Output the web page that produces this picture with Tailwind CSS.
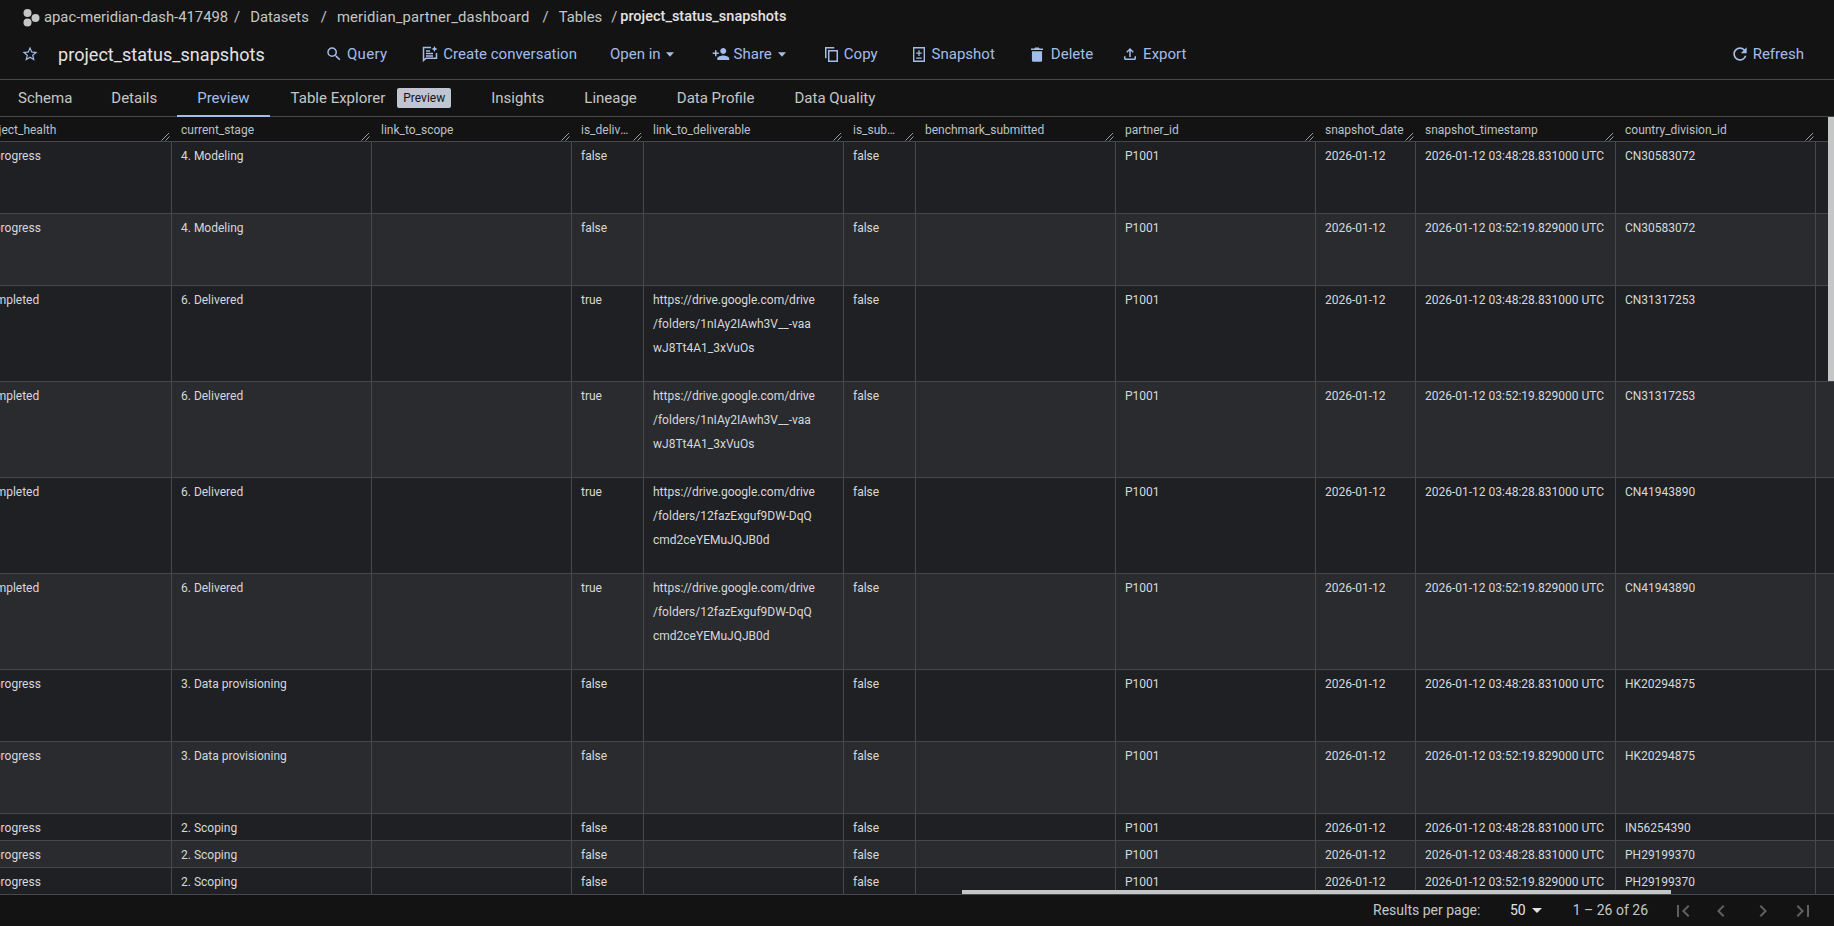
<!DOCTYPE html>
<html lang="en">

<head>
  <meta charset="UTF-8">
  <title>project_status_snapshots</title>
  <script src="https://cdn.jsdelivr.net/npm/@tailwindcss/browser@4"></script>
</head>

<body class="h-screen overflow-hidden bg-[#131314] font-[Roboto,sans-serif] text-[#c4c7c5] flex flex-col">
  <!-- Breadcrumb -->
  <nav class="h-[32px] flex items-center text-[14.8px] pl-[22px] pt-[2px] box-border shrink-0 whitespace-nowrap">
    <svg class="w-[19px] h-[19px] fill-[#c4c7c5]" viewBox="0 0 19 19">
      <circle cx="5.5" cy="5" r="4" />
      <circle cx="13.5" cy="10" r="4" />
      <circle cx="5.5" cy="14.5" r="4" />
    </svg>
    <span class="ml-[3px]">apac-meridian-dash-417498</span>
    <span class="ml-[6px]">/</span>
    <span class="ml-[10px]">Datasets</span>
    <span class="ml-[12px]">/</span>
    <span class="ml-[10px] tracking-[0.15px]">meridian_partner_dashboard</span>
    <span class="ml-[13px]">/</span>
    <span class="ml-[10px]">Tables</span>
    <span class="ml-[9px]">/</span>
    <span class="ml-[3px] text-[14.5px] text-[#e3e3e3] font-medium">project_status_snapshots</span>
  </nav>

  <!-- Title and actions -->
  <header class="h-[48px] flex items-center border-b border-[#47484b] text-[15px] text-[#a3bde8] shrink-0 box-border pb-[3px] whitespace-nowrap">
    <svg class="ml-[21px] w-[18px] h-[18px] fill-[#a3bde8]" viewBox="0 0 24 24">
      <path d="M22 9.24l-7.19-.62L12 2 9.19 8.63 2 9.24l5.46 4.73L5.82 21 12 17.27 18.18 21l-1.63-7.03L22 9.24zM12 15.4l-3.76 2.27 1-4.28-3.32-2.88 4.38-.38L12 6.1l1.71 4.04 4.38.38-3.32 2.88 1 4.28L12 15.4z" />
    </svg>
    <h1 class="ml-[19px] text-[18px] tracking-[0.05px] text-[#e3e3e3] w-[207px]">project_status_snapshots</h1>

    <button class="ml-[60px] flex items-center">
      <svg class="w-[18px] h-[18px] fill-[#a3bde8]" viewBox="0 0 24 24">
        <path d="M15.5 14h-.79l-.28-.27A6.471 6.471 0 0 0 16 9.5 6.5 6.5 0 1 0 9.5 16c1.61 0 3.09-.59 4.23-1.57l.27.28v.79l5 4.99L20.49 19l-4.99-5zm-6 0C7.01 14 5 11.99 5 9.5S7.01 5 9.5 5 14 7.01 14 9.5 11.99 14 9.5 14z" />
      </svg>
      <span class="ml-[4px] tracking-[0.3px]">Query</span>
    </button>

    <button class="ml-[35px] flex items-center">
      <svg class="w-[16px] h-[16px] fill-none stroke-[#a3bde8] stroke-[1.5]" viewBox="0 0 16 16">
        <path d="M9 1.5H1.5v13l2.5-2.2h10.5V7" />
        <path d="M4 5h4M4 7.5h7M4 10h7" />
        <path class="fill-[#a3bde8] stroke-none" d="M12.5 0l.9 2.1 2.1.9-2.1.9-.9 2.1-.9-2.1-2.1-.9 2.1-.9z" />
      </svg>
      <span class="ml-[5px]">Create conversation</span>
    </button>

    <button class="ml-[33px] flex items-center">
      <span>Open in</span>
      <svg class="ml-[5px] w-[8px] h-[5px] fill-[#a3bde8]" viewBox="0 0 9 5"><path d="M0 0h9L4.5 5z" /></svg>
    </button>

    <button class="ml-[38px] flex items-center">
      <svg class="w-[18px] h-[18px] fill-[#a3bde8]" viewBox="0 0 24 24">
        <path d="M15 12c2.21 0 4-1.79 4-4s-1.79-4-4-4-4 1.79-4 4 1.79 4 4 4zm-9-2V7H4v3H1v2h3v3h2v-3h3v-2H6zm9 4c-2.67 0-8 1.34-8 4v2h16v-2c0-2.66-5.33-4-8-4z" />
      </svg>
      <span class="ml-[4px]">Share</span>
      <svg class="ml-[6px] w-[8px] h-[5px] fill-[#a3bde8]" viewBox="0 0 9 5"><path d="M0 0h9L4.5 5z" /></svg>
    </button>

    <button class="ml-[39px] flex items-center">
      <svg class="w-[13px] h-[15px] fill-[#a3bde8]" viewBox="0 0 14 16">
        <path d="M0 0h10v1.6H1.6V12H0z" />
        <path fill-rule="evenodd" d="M3.2 3.2H14V16H3.2zM4.8 4.8v9.6h7.6V4.8z" />
      </svg>
      <span class="ml-[6px]">Copy</span>
    </button>

    <button class="ml-[35px] flex items-center">
      <svg class="w-[12px] h-[15px] fill-[#a3bde8]" viewBox="0 0 13 16">
        <path fill-rule="evenodd" d="M0 0h13v16H0zM1.5 1.5v13h10v-13z" />
        <path d="M5.8 3.5h1.4v2.3h2.3v1.4H7.2v2.3H5.8V7.2H3.5V5.8h2.3zM3.5 11.2h6v1.4h-6z" />
      </svg>
      <span class="ml-[7px]">Snapshot</span>
    </button>

    <button class="ml-[36px] flex items-center">
      <svg class="w-[12px] h-[15px] fill-[#a3bde8]" viewBox="0 0 13 16">
        <path d="M1 4.5h11V14.5a1.4 1.4 0 0 1-1.4 1.4H2.4A1.4 1.4 0 0 1 1 14.5zM0 1.6h3.6L4.6.5h3.8l1 1.1H13v1.6H0z" />
      </svg>
      <span class="ml-[8px]">Delete</span>
    </button>

    <button class="ml-[28px] flex items-center">
      <svg class="w-[18px] h-[18px] fill-[#a3bde8]" viewBox="0 0 24 24">
        <path d="M18 15v3H6v-3H4v3c0 1.1.9 2 2 2h12c1.1 0 2-.9 2-2v-3h-2zM7 9l1.41 1.41L11 7.83V16h2V7.83l2.59 2.58L17 9l-5-5-5 5z" />
      </svg>
      <span class="ml-[4px]">Export</span>
    </button>

    <button class="ml-auto mr-[30px] flex items-center">
      <svg class="w-[20px] h-[20px] fill-[#a3bde8]" viewBox="0 0 24 24">
        <path d="M17.65 6.35A7.958 7.958 0 0 0 12 4c-4.42 0-7.99 3.58-7.99 8s3.57 8 7.99 8c3.73 0 6.84-2.55 7.73-6h-2.08A5.99 5.99 0 0 1 12 18c-3.31 0-6-2.69-6-6s2.69-6 6-6c1.66 0 3.14.69 4.22 1.78L13 11h7V4l-2.35 2.35z" />
      </svg>
      <span class="ml-[3px]">Refresh</span>
    </button>
  </header>

  <!-- Tabs -->
  <div class="h-[37px] flex items-stretch border-b border-[#47484b] text-[15px] shrink-0 box-border whitespace-nowrap">
    <a class="pl-[18px] pr-[19px] flex items-center">Schema</a>
    <a class="px-[20px] flex items-center">Details</a>
    <a class="px-[20px] flex items-center text-[#a3bde8] border-b-2 border-[#a3bde8] pt-[2px] -mb-[1px]">Preview</a>
    <a class="pl-[21px] pr-[20px] flex items-center">
      <span>Table Explorer</span>
      <span class="ml-[12px] w-[54px] h-[20px] rounded-[2px] bg-[#bfc5d2] text-[#131314] text-[12px] flex items-center justify-center">Preview</span>
    </a>
    <a class="px-[20px] flex items-center">Insights</a>
    <a class="px-[20px] flex items-center">Lineage</a>
    <a class="px-[20px] flex items-center">Data Profile</a>
    <a class="px-[20px] flex items-center">Data Quality</a>
  </div>

  <!-- Table -->
  <div class="relative flex-1 overflow-hidden">
    <table id="preview-table" class="table-fixed border-separate border-spacing-0 ml-[-28px] w-[2200px] text-[12px]">
      <colgroup>
        <col class="w-[200px]"><col class="w-[200px]"><col class="w-[200px]"><col class="w-[72px]">
        <col class="w-[200px]"><col class="w-[72px]"><col class="w-[200px]"><col class="w-[200px]">
        <col class="w-[100px]"><col class="w-[200px]"><col class="w-[200px]"><col class="w-[356px]">
      </colgroup>
      <thead>
        <tr id="head-row" class="h-[25px]"></tr>
      </thead>
      <tbody id="rows"></tbody>
    </table>

    <!-- Overlay scrollbars -->
    <div class="absolute top-0 right-0 w-[6px] h-[264px] bg-[#c4c7c5]"></div>
    <div class="absolute bottom-[1px] left-[962px] w-[709px] h-[4px] bg-[#c4c7c5]"></div>
  </div>

  <!-- Pagination -->
  <footer class="h-[31px] flex items-center text-[14px] shrink-0">
    <span class="ml-[1373px] w-[108px] whitespace-nowrap">Results per page:</span>
    <span class="ml-[29px] text-[#e3e3e3]">50</span>
    <svg class="ml-[6px] w-[10px] h-[5px] fill-[#e3e3e3]" viewBox="0 0 10 5"><path d="M0 0h10L5 5z" /></svg>
    <span class="ml-[31px] whitespace-nowrap">1 – 26 of 26</span>
    <svg class="ml-[23px] w-[24px] h-[24px] fill-[#5f6063]" viewBox="0 0 24 24"><path d="M18.41 16.59L13.82 12l4.59-4.59L17 6l-6 6 6 6zM6 6h2v12H6z" /></svg>
    <svg class="ml-[14px] w-[24px] h-[24px] fill-[#5f6063]" viewBox="0 0 24 24"><path d="M15.41 7.41L14 6l-6 6 6 6 1.41-1.41L10.83 12z" /></svg>
    <svg class="ml-[18px] w-[24px] h-[24px] fill-[#5f6063]" viewBox="0 0 24 24"><path d="M10 6L8.59 7.41 13.17 12l-4.58 4.59L10 18l6-6z" /></svg>
    <svg class="ml-[16px] w-[24px] h-[24px] fill-[#5f6063]" viewBox="0 0 24 24"><path d="M5.59 7.41L10.18 12l-4.59 4.59L7 18l6-6-6-6zM16 6h2v12h-2z" /></svg>
  </footer>

  <script>
    const columns = ['project_health', 'current_stage', 'link_to_scope', 'is_deliverable', 'link_to_deliverable', 'is_submitted',
      'benchmark_submitted', 'partner_id', 'snapshot_date', 'snapshot_timestamp', 'country_division_id', ''];

    const T1 = '2026-01-12 03:48:28.831000 UTC';
    const T2 = '2026-01-12 03:52:19.829000 UTC';
    const LINK_A = 'https://drive.google.com/drive<br>/folders/1nIAy2IAwh3V__-vaa<br>wJ8Tt4A1_3xVuOs';
    const LINK_B = 'https://drive.google.com/drive<br>/folders/12fazExguf9DW-DqQ<br>cmd2ceYEMuJQJB0d';

    // health, stage, delivered, link, timestamp, country, row height class
    const rows = [
      ['In progress', '4. Modeling', 'false', '', T1, 'CN30583072', 'h-[72px]'],
      ['In progress', '4. Modeling', 'false', '', T2, 'CN30583072', 'h-[72px]'],
      ['Completed', '6. Delivered', 'true', LINK_A, T1, 'CN31317253', 'h-[96px]'],
      ['Completed', '6. Delivered', 'true', LINK_A, T2, 'CN31317253', 'h-[96px]'],
      ['Completed', '6. Delivered', 'true', LINK_B, T1, 'CN41943890', 'h-[96px]'],
      ['Completed', '6. Delivered', 'true', LINK_B, T2, 'CN41943890', 'h-[96px]'],
      ['In progress', '3. Data provisioning', 'false', '', T1, 'HK20294875', 'h-[72px]'],
      ['In progress', '3. Data provisioning', 'false', '', T2, 'HK20294875', 'h-[72px]'],
      ['In progress', '2. Scoping', 'false', '', T1, 'IN56254390', 'h-[27px]'],
      ['In progress', '2. Scoping', 'false', '', T1, 'PH29199370', 'h-[27px]'],
      ['In progress', '2. Scoping', 'false', '', T2, 'PH29199370', 'h-[27px]']
    ];

    const handle = `<svg class="absolute right-[2px] bottom-0 w-[9px] h-[9px] stroke-[#9aa0a6]" viewBox="0 0 9 9"><path d="M0.5 8.5L8 1M4.5 8.5L8.5 4.5" /></svg>`;

    document.getElementById('head-row').innerHTML = columns.map(name =>
      `<th class="relative box-border border-b border-[#47484b] pl-[9px] pr-[12px] pt-[2px] text-left font-normal leading-[22px] text-[#bdc1c6] whitespace-nowrap truncate">${name}${name ? handle : ''}</th>`
    ).join('');

    document.getElementById('rows').innerHTML = rows.map((row, i) => {
      const [health, stage, delivered, link, time, country, height] = row;
      const cells = [health, stage, '', delivered, link, 'false', '', 'P1001', '2026-01-12', time, country, ''];
      const bg = i % 2 === 0 ? 'bg-[#1f2023]' : 'bg-[#2a2b2f]';
      return `<tr class="${height} ${bg}">` + cells.map(text =>
        `<td class="box-border border-r border-b border-[#47484b] pl-[9px] pt-[2px] align-top leading-6 text-[#d6d8db] whitespace-nowrap">${text}</td>`
      ).join('') + '</tr>';
    }).join('');
  </script>
</body>

</html>
